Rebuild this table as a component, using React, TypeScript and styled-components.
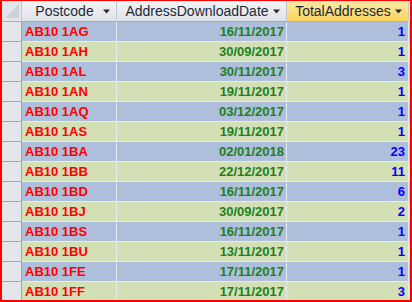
import styled, { createGlobalStyle } from "styled-components";

const GlobalStyle = createGlobalStyle`
	html, body {
		margin: 0;
		padding: 0;
		background: #ffffff;
	}
`;

type Row = { postcode: string; date: string; total: number };

const rows: Row[] = [
	{ postcode: "AB10 1AG", date: "16/11/2017", total: 1 },
	{ postcode: "AB10 1AH", date: "30/09/2017", total: 1 },
	{ postcode: "AB10 1AL", date: "30/11/2017", total: 3 },
	{ postcode: "AB10 1AN", date: "19/11/2017", total: 1 },
	{ postcode: "AB10 1AQ", date: "03/12/2017", total: 1 },
	{ postcode: "AB10 1AS", date: "19/11/2017", total: 1 },
	{ postcode: "AB10 1BA", date: "02/01/2018", total: 23 },
	{ postcode: "AB10 1BB", date: "22/12/2017", total: 11 },
	{ postcode: "AB10 1BD", date: "16/11/2017", total: 6 },
	{ postcode: "AB10 1BJ", date: "30/09/2017", total: 2 },
	{ postcode: "AB10 1BS", date: "16/11/2017", total: 1 },
	{ postcode: "AB10 1BU", date: "13/11/2017", total: 1 },
	{ postcode: "AB10 1FE", date: "17/11/2017", total: 1 },
	{ postcode: "AB10 1FF", date: "17/11/2017", total: 3 },
];

const FilterArrow = () => (
	<svg width="7" height="5" viewBox="0 0 7 5">
		<path d="M0 0.5 H7 L3.5 4.5 Z" fill="#2b2b2b" />
	</svg>
);

const App = () => {
	return (
		<>
			<GlobalStyle />
			<Sheet>
				<HeaderRow>
					<Corner>
						<svg width="19" height="20" viewBox="0 0 19 20">
							<path d="M17 3 V17 H3 Z" fill="#cdd2da" />
						</svg>
					</Corner>
					<HeadCell>
						<HeadLabel>Postcode</HeadLabel>
						<FilterArrow />
					</HeadCell>
					<HeadCell>
						<HeadLabel>AddressDownloadDate</HeadLabel>
						<FilterArrow />
					</HeadCell>
					<HeadCell selected>
						<HeadLabel>TotalAddresses</HeadLabel>
						<FilterArrow />
					</HeadCell>
				</HeaderRow>
				{rows.map((r, i) => (
					<DataRow key={r.postcode} alt={i % 2 === 1}>
						<Selector />
						<PostcodeCell>{r.postcode}</PostcodeCell>
						<DateCell>{r.date}</DateCell>
						<TotalCell>{r.total}</TotalCell>
					</DataRow>
				))}
			</Sheet>
		</>
	);
};

export default App;

const Sheet = styled.div`
	width: 412px;
	height: 302px;
	box-sizing: border-box;
	border: 2px solid #ff0000;
	border-top-width: 1px;
	overflow: hidden;
	background: #f4f5f7;
	font-family: "Liberation Sans", Arial, sans-serif;
`;

const Grid = styled.div`
	display: grid;
	grid-template-columns: 20px 95px 170px 122px;
`;

const HeaderRow = styled(Grid)`
	height: 21px;
`;

const Corner = styled.div`
	background: #e3e6ea;
	border-right: 1px solid #c3c8d0;
	border-bottom: 1px solid #a9aeb6;
	display: flex;
	align-items: flex-start;
	overflow: hidden;
`;

const HeadCell = styled.div<{ selected?: boolean }>`
	display: flex;
	align-items: center;
	padding: 0 6px 0 4px;
	background: ${(p) =>
		p.selected
			? "linear-gradient(#fdeaa6, #fbd35b)"
			: "linear-gradient(#f3f4f6, #dfe2e7)"};
	border-right: 1px solid #c3c8d0;
	border-bottom: 1px solid #a9aeb6;
	font-size: 14px;
	color: #1c2838;
	white-space: nowrap;
	overflow: hidden;
`;

const HeadLabel = styled.span`
	flex: 1;
	text-align: center;
	padding-bottom: 1px;
`;

const DataRow = styled(Grid)<{ alt: boolean }>`
	height: 20px;
	background: ${(p) => (p.alt ? "#d3dfb5" : "#aebfdb")};
	font-size: 13px;
	font-weight: bold;
`;

const Selector = styled.div`
	background: #e3e6ea;
	border-right: 1px solid #9fa4ab;
	border-bottom: 1px solid #a3a8af;
`;

const Cell = styled.div`
	display: flex;
	align-items: center;
	padding: 0 3px;
	border-right: 1px solid #e6ebf2;
	border-bottom: 1px solid #e6ebf2;
	white-space: nowrap;
	overflow: hidden;
`;

const PostcodeCell = styled(Cell)`
	color: #ff0000;
	padding-left: 3px;
`;

const DateCell = styled(Cell)`
	justify-content: flex-end;
	color: #1f7f1f;
	padding-right: 2px;
`;

const TotalCell = styled(Cell)`
	justify-content: flex-end;
	color: #0000ff;
	padding-right: 3px;
`;
